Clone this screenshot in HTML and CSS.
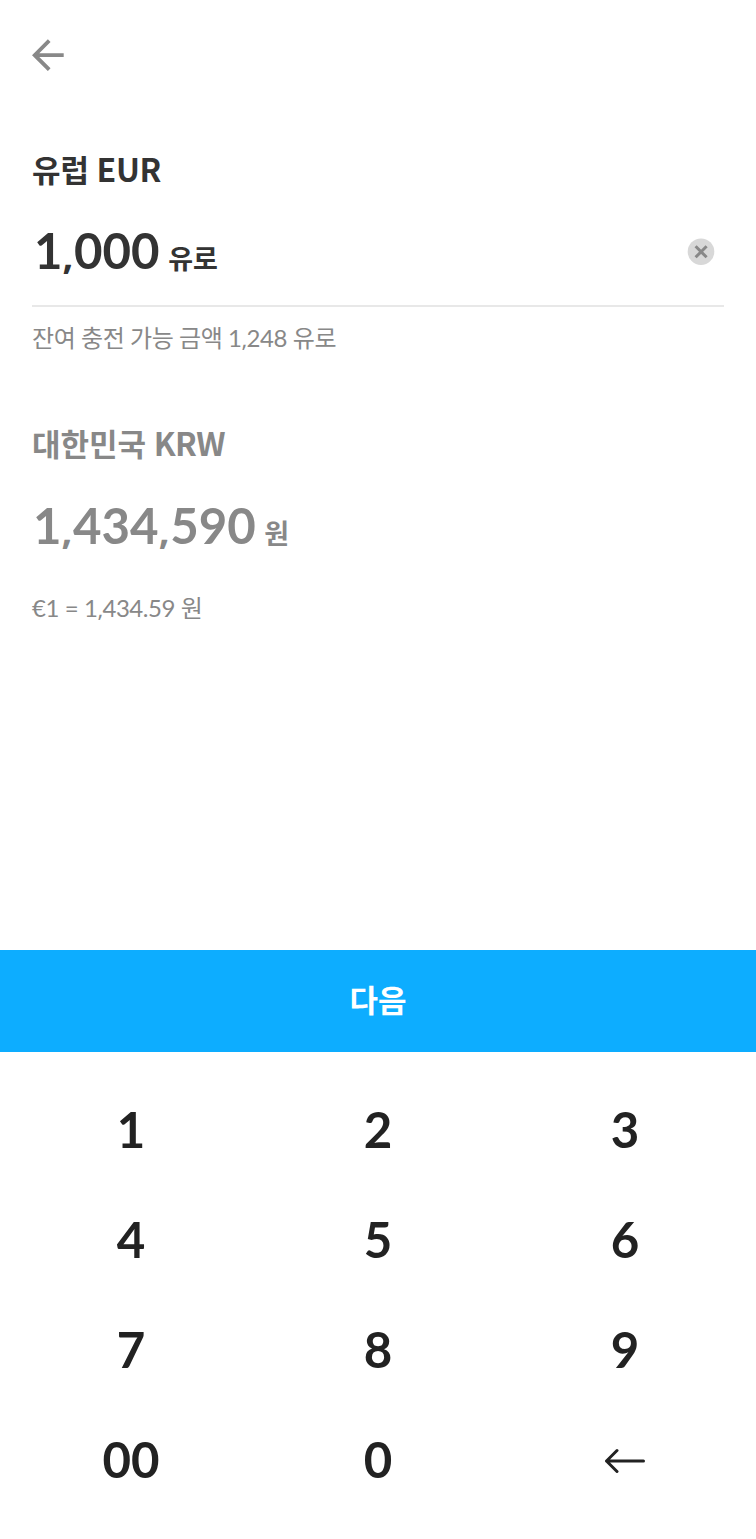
FILE: index.html
```html
<!DOCTYPE html>
<html lang="ko">
<head>
<meta charset="utf-8">
<title>환전 충전</title>
<link rel="stylesheet" href="styles.css">
</head>
<body>
<main class="screen">
  <header class="topbar">
    <svg class="back" viewBox="0 0 32 32"><path d="M31.7 16.2H2.6M17.2 1.7L2.7 16.2l14.5 14.5"/></svg>
  </header>
  <section class="source">
    <h2 class="currency"><span class="ko">유럽</span> <span class="code code-eur">EUR</span></h2>
    <div class="field">
      <p class="amount amount-eur"><span class="number">1<span class="comma">,</span>000</span><span class="unit">유로</span></p>
      <svg class="clear" viewBox="0 0 28 28"><circle cx="14" cy="13.7" r="13.3"/><path d="M8.6 8.3l11 11M19.6 8.3l-11 11"/></svg>
    </div>
    <p class="note limit">잔여 충전 가능 금액 <span class="digits">1<span class="comma">,</span>248</span> 유로</p>
  </section>
  <section class="target">
    <h2 class="currency"><span class="ko">대한민국</span> <span class="code code-krw">KRW</span></h2>
    <p class="amount amount-krw"><span class="number">1<span class="comma">,</span>434<span class="comma">,</span>590</span><span class="unit">원</span></p>
    <p class="note rate"><span class="digits">€1 = 1<span class="comma">,</span>434.59</span> 원</p>
  </section>
  <button class="next">다음</button>
  <div class="keypad">
    <span>1</span><span>2</span><span>3</span>
    <span>4</span><span>5</span><span>6</span>
    <span>7</span><span>8</span><span>9</span>
    <span>00</span><span>0</span>
    <span><svg class="erase" viewBox="0 0 42 30"><path d="M39.5 18H2.5M13 7.5L2.5 18 13 28.5"/></svg></span>
  </div>
</main>
</body>
</html>
```
FILE: styles.css
```css
* { box-sizing: border-box; margin: 0; padding: 0; }
body { background: #fff; font-family: Lato, "Noto Sans CJK KR", sans-serif; }
.screen { display: flex; flex-direction: column; width: 756px; height: 1539px; overflow: hidden; }
.topbar { height: 138px; padding: 39px 32px 0; }
svg { display: block; fill: none; }
.back { width: 32px; height: 32px; stroke: #888; stroke-width: 3.8; }
.source { height: 274px; padding: 0 32px; color: #333; }
.currency { height: 60px; line-height: 60px; font-size: 31px; font-weight: 700; white-space: nowrap; }
.code { font-family: "Noto Sans CJK KR", sans-serif; font-size: 32px; }
.code-eur { letter-spacing: -0.3px; }
.code-krw { letter-spacing: -0.6px; }
.field { display: flex; justify-content: space-between; height: 109px; padding-right: 9px; border-bottom: 2px solid #e8e8e8; }
.amount { height: 104px; line-height: 104px; white-space: nowrap; }
.amount-eur { padding-left: 2px; }
.amount-krw { height: 105px; line-height: 106px; padding-left: 1px; }
.number { font-size: 49.2px; font-weight: 700; }
.comma { display: inline-block; width: 11.5px; font-family: "Noto Sans", sans-serif; font-size: 38px; line-height: 1; }
.unit { margin-left: 8.5px; font-size: 27px; font-weight: 700; }
.clear { width: 28px; height: 28px; margin-top: 40px; stroke: #888; stroke-width: 3; }
.clear circle { fill: #d8d8d8; stroke: none; }
.note { height: 60px; line-height: 60px; font-size: 24px; letter-spacing: -0.43px; color: #888; white-space: nowrap; }
.note .comma { width: 5px; font-size: 22px; }
.limit { padding-top: 1px; }
.rate { padding-top: 1px; }
.target { height: 538px; padding: 0 32px; color: #888; }
.next { height: 102px; padding-bottom: 5px; border: 0; background: #0dadff; color: #fff; font: 700 31px "Noto Sans CJK KR", sans-serif; }
.keypad { display: grid; grid-template-columns: repeat(3, 247px); grid-auto-rows: 110px; padding: 21px 7px 0 7.5px; color: #222; font-size: 49.2px; font-weight: 700; }
.keypad span { display: flex; align-items: center; justify-content: center; }
.erase { width: 42px; height: 30px; stroke: #222; stroke-width: 3; stroke-linecap: round; stroke-linejoin: round; }
```
